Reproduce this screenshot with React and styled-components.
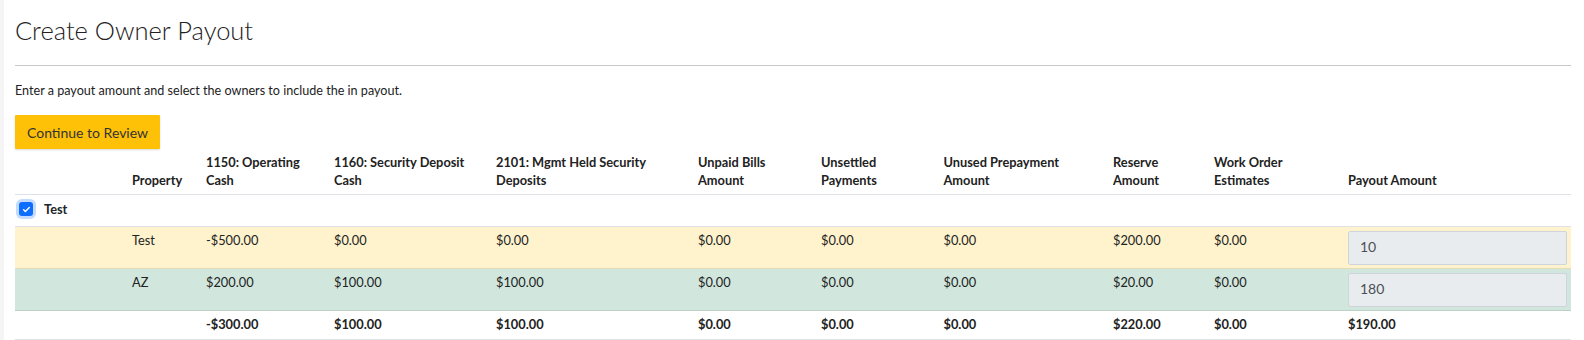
import styled, { createGlobalStyle } from "styled-components";

const GlobalStyle = createGlobalStyle`
  body {
    margin: 0;
    background: #fff;
    font-family: Lato, "Noto Sans", sans-serif;
    color: #212529;
  }
`;

const Page = styled.div`
  min-height: 340px;
  box-sizing: border-box;
  padding: 0 13px 0 11px;
  border-left: 4px solid #f5f5f5;
`;

const Title = styled.h1`
  margin: 0;
  padding-top: 15px;
  font-size: 25.5px;
  line-height: 31px;
  font-weight: 300;
  color: #222;
`;

const Rule = styled.hr`
  margin: 19px 0 0;
  border: 0;
  border-top: 1px solid #c8c8c8;
`;

const Intro = styled.p`
  margin: 16px 0 0;
  font-size: 12.6px;
  line-height: 18px;
  color: #222;
`;

const ReviewButton = styled.button`
  display: block;
  margin-top: 15px;
  height: 34px;
  padding: 0 12px;
  border: 0;
  border-radius: 1px;
  background: #ffc107;
  box-shadow: 0 1px 2px rgba(0, 0, 0, 0.15);
  font-family: inherit;
  font-size: 14px;
  color: #333;
  cursor: pointer;
`;

const Table = styled.table`
  width: 100%;
  table-layout: fixed;
  border-collapse: collapse;
  font-size: 12.8px;
  line-height: 18px;
`;

const Head = styled.th`
  padding: 4px 4px 5px;
  text-align: left;
  vertical-align: bottom;
  font-weight: 700;
  color: #222;
  border-bottom: 1px solid #dee2e6;
`;

const Row = styled.tr`
  background: ${(p) => p.$bg || "transparent"};
  border-bottom: 1px solid ${(p) => p.$line || "#dee2e6"};
`;

const Cell = styled.td`
  padding: 4px 4px 3px;
  vertical-align: top;
  color: #222;
`;

const TotalCell = styled.td`
  padding: 4px 4px 6px;
  font-weight: 700;
  color: #222;
`;

const OwnerCell = styled.td`
  padding: 5px 4px 8px 3px;
`;

const OwnerLabel = styled.label`
  display: flex;
  align-items: center;
  gap: 11px;
  font-weight: 700;
`;

const Check = styled.span`
  width: 14px;
  height: 14px;
  margin-left: 1px;
  border-radius: 3px;
  background: #0d6efd;
  box-shadow: 0 0 0 3px rgba(13, 110, 253, 0.25);
  display: flex;
  align-items: center;
  justify-content: center;
`;

const AmountInput = styled.input`
  display: block;
  width: 100%;
  box-sizing: border-box;
  height: 34px;
  padding: 0 11px 4px;
  border: 1px solid #ced4da;
  border-radius: 2px;
  background: #e9ecef;
  font-family: inherit;
  font-size: 14px;
  color: #495057;
`;

const widths = [113, 74, 128, 162, 202, 123, 122.5, 169.5, 101, 134, 227];

const headers = [
  "",
  "Property",
  ["1150: Operating", "Cash"],
  ["1160: Security Deposit", "Cash"],
  ["2101: Mgmt Held Security", "Deposits"],
  ["Unpaid Bills", "Amount"],
  ["Unsettled", "Payments"],
  ["Unused Prepayment", "Amount"],
  ["Reserve", "Amount"],
  ["Work Order", "Estimates"],
  "Payout Amount",
];

const rows = [
  {
    name: "Test",
    bg: "#fff3cd",
    line: "#e6dbb9",
    values: ["-$500.00", "$0.00", "$0.00", "$0.00", "$0.00", "$0.00", "$200.00", "$0.00"],
    payout: "10",
  },
  {
    name: "AZ",
    bg: "#d1e7dd",
    line: "#bcd0c7",
    values: ["$200.00", "$100.00", "$100.00", "$0.00", "$0.00", "$0.00", "$20.00", "$0.00"],
    payout: "180",
  },
];

const totals = ["-$300.00", "$100.00", "$100.00", "$0.00", "$0.00", "$0.00", "$220.00", "$0.00", "$190.00"];

const App = () => {
  return (
    <Page>
      <GlobalStyle />
      <Title>Create Owner Payout</Title>
      <Rule />
      <Intro>Enter a payout amount and select the owners to include the in payout.</Intro>
      <ReviewButton>Continue to Review</ReviewButton>
      <Table>
        <colgroup>
          {widths.map((w, i) => (
            <col key={i} style={{ width: w }} />
          ))}
        </colgroup>
        <thead>
          <tr>
            {headers.map((h, i) => (
              <Head key={i}>
                {Array.isArray(h) ? (
                  <>
                    {h[0]}
                    <br />
                    {h[1]}
                  </>
                ) : (
                  h
                )}
              </Head>
            ))}
          </tr>
        </thead>
        <tbody>
          <Row>
            <OwnerCell colSpan={11}>
              <OwnerLabel>
                <Check>
                  <svg width="9" height="9" viewBox="0 0 16 16">
                    <path
                      d="M3 8.5l3 3 7-7"
                      fill="none"
                      stroke="#fff"
                      strokeWidth="2.6"
                      strokeLinecap="round"
                      strokeLinejoin="round"
                    />
                  </svg>
                </Check>
                Test
              </OwnerLabel>
            </OwnerCell>
          </Row>
          {rows.map((r) => (
            <Row key={r.name} $bg={r.bg} $line={r.line}>
              <Cell />
              <Cell>{r.name}</Cell>
              {r.values.map((v, i) => (
                <Cell key={i}>{v}</Cell>
              ))}
              <Cell>
                <AmountInput value={r.payout} disabled readOnly />
              </Cell>
            </Row>
          ))}
          <Row>
            <TotalCell />
            <TotalCell />
            {totals.map((v, i) => (
              <TotalCell key={i}>{v}</TotalCell>
            ))}
          </Row>
        </tbody>
      </Table>
    </Page>
  );
};

export default App;
